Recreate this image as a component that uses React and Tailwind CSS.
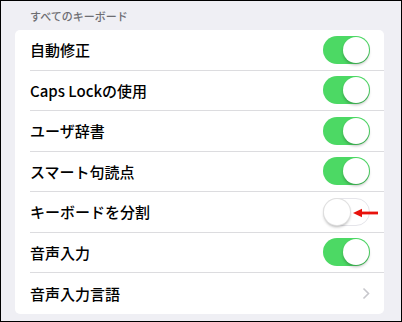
import React from 'react'

const rows = [
    { label: '自動修正', on: true },
    { label: 'Caps Lockの使用', on: true },
    { label: 'ユーザ辞書', on: true },
    { label: 'スマート句読点', on: true },
    { label: 'キーボードを分割', on: false, arrow: true },
    { label: '音声入力', on: true },
    { label: '音声入力言語', chevron: true },
]

function Toggle({ on }) {
    if (on) {
        return (
            <div className="flex h-[28px] w-[47px] items-center justify-end rounded-full bg-[#4cd964] px-[1px]">
                <div className="h-[26px] w-[26px] rounded-full bg-white shadow-[0_2px_3px_rgba(0,0,0,0.25)]" />
            </div>
        )
    }
    return (
        <div className="flex h-[28px] w-[47px] items-center justify-start rounded-full border border-[#e5e5ea] bg-white">
            <div className="h-[26px] w-[26px] rounded-full bg-white shadow-[0_2px_3px_rgba(0,0,0,0.3)] ring-1 ring-[#e0e0e0]" />
        </div>
    )
}

export default function App() {
    return (
        <div
            className="h-[322px] w-[402px] border border-black bg-[#efeff4] text-black"
            style={{ fontFamily: '"Noto Sans CJK JP", "Noto Sans", sans-serif' }}
        >
            <div className="pl-[29px] pt-[7px] text-[11px] font-medium leading-[16px] text-[#6d6d72]">すべてのキーボード</div>
            <div className="ml-[14px] mt-[6px] w-[369px] rounded-[5px] bg-white">
                {rows.map((r, i) => (
                    <div key={r.label} className="relative flex h-[40.5px] items-center pl-[15px]">
                        <div className={`flex h-full flex-1 items-center pr-[14px] ${i < rows.length - 1 ? 'border-b border-[#dcdcdf]' : ''}`}>
                            <span className="flex-1 text-[15px] font-medium leading-none">{r.label}</span>
                            {r.chevron ? (
                                <svg width="8" height="13" viewBox="0 0 8 13">
                                    <path d="M1.5 1.5 L6.5 6.5 L1.5 11.5" fill="none" stroke="#c7c7cc" strokeWidth="1.6" />
                                </svg>
                            ) : (
                                <Toggle on={r.on} />
                            )}
                        </div>
                        {r.arrow && (
                            <svg width="26" height="10" viewBox="0 0 26 10" className="absolute left-[338px] top-[16px]">
                                <path d="M0 5 L9 0.8 L9 9.2 Z" fill="#e8120c" />
                                <rect x="8" y="3.6" width="17" height="2.8" fill="#e8120c" />
                            </svg>
                        )}
                    </div>
                ))}
            </div>
        </div>
    )
}
